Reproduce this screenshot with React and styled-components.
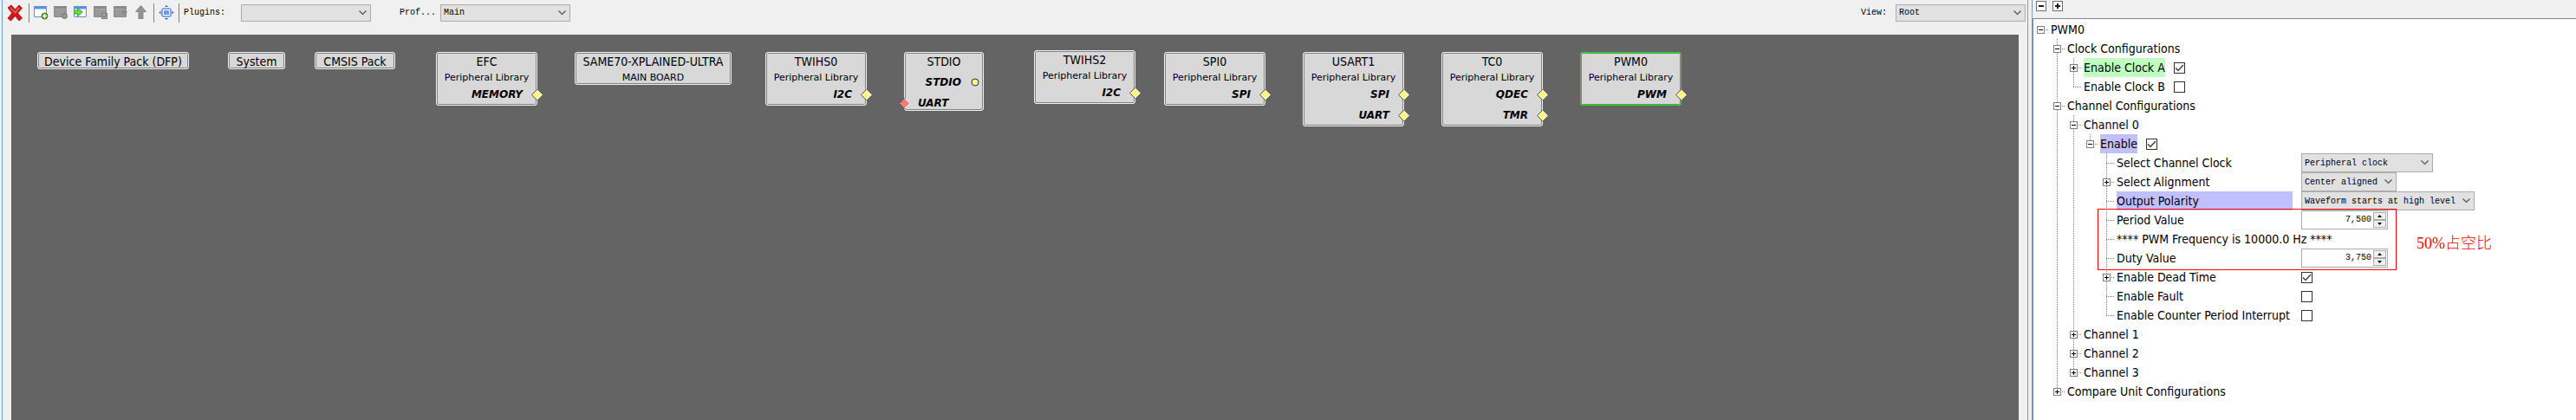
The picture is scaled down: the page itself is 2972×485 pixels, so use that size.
import React from 'react'
import styled, { createGlobalStyle, css } from 'styled-components'

const ui = `"DejaVu Sans", Verdana, sans-serif`
const narrow = `"DejaVu Sans Condensed", Tahoma, sans-serif`
const mono = `"Liberation Mono", "Courier New", monospace`

const blocks = [
    { name: 'Device Family Pack (DFP)', x: 30, y: 20, w: 175 },
    { name: 'System', x: 250, y: 20, w: 66 },
    { name: 'CMSIS Pack', x: 350, y: 20, w: 93 },
    { name: 'EFC', sub: 'Peripheral Library', x: 490, y: 20, w: 117, ports: [{ name: 'MEMORY' }] },
    { name: 'SAME70-XPLAINED-ULTRA', sub: 'MAIN BOARD', x: 650, y: 20, w: 181 },
    { name: 'TWIHS0', sub: 'Peripheral Library', x: 870, y: 20, w: 117, ports: [{ name: 'I2C' }] },
    { name: 'STDIO', x: 1030, y: 20, w: 92, ports: [{ name: 'STDIO', kind: 'dot' }, { name: 'UART', kind: 'in' }] },
    { name: 'TWIHS2', sub: 'Peripheral Library', x: 1180, y: 18, w: 117, ports: [{ name: 'I2C' }] },
    { name: 'SPI0', sub: 'Peripheral Library', x: 1330, y: 20, w: 117, ports: [{ name: 'SPI' }] },
    { name: 'USART1', sub: 'Peripheral Library', x: 1490, y: 20, w: 117, ports: [{ name: 'SPI' }, { name: 'UART' }] },
    { name: 'TC0', sub: 'Peripheral Library', x: 1650, y: 20, w: 117, ports: [{ name: 'QDEC' }, { name: 'TMR' }] },
    { name: 'PWM0', sub: 'Peripheral Library', x: 1810, y: 20, w: 117, ports: [{ name: 'PWM' }], active: true },
]

// guides: one letter per indent column, | line, . blank, t branch, e last branch
const treeTop = [
    { id: 'pwm0', label: 'PWM0', guides: '.', toggle: '-' },
    { id: 'clocks', label: 'Clock Configurations', guides: '.t', toggle: '-' },
    { id: 'clka', label: 'Enable Clock A', guides: '.|t', toggle: '+', mark: '#c0ffc0', check: true },
    { id: 'clkb', label: 'Enable Clock B', guides: '.|e', check: false },
    { id: 'channels', label: 'Channel Configurations', guides: '.t', toggle: '-' },
    { id: 'ch0', label: 'Channel 0', guides: '.|t', toggle: '-' },
    { id: 'ch0en', label: 'Enable', guides: '.||e', toggle: '-', mark: '#c0c0ff', check: true },
    { id: 'clksel', label: 'Select Channel Clock', guides: '.||.t', wide: true, select: 'Peripheral clock', size: 152 },
    { id: 'align', label: 'Select Alignment', guides: '.||.t', toggle: '+', wide: true, select: 'Center aligned', size: 110 },
    { id: 'polarity', label: 'Output Polarity', guides: '.||.t', wide: true, mark: '#c0c0ff', select: 'Waveform starts at high level', size: 200 },
]

const treeMarked = [
    { id: 'period', label: 'Period Value', guides: '.||.t', wide: true, number: '7,500' },
    { id: 'freq', label: '**** PWM Frequency is 10000.0 Hz ****', guides: '.||.t' },
    { id: 'duty', label: 'Duty Value', guides: '.||.t', wide: true, number: '3,750' },
]

const treeBottom = [
    { id: 'dead', label: 'Enable Dead Time', guides: '.||.t', toggle: '+', wide: true, check: true },
    { id: 'fault', label: 'Enable Fault', guides: '.||.t', wide: true, check: false },
    { id: 'irq', label: 'Enable Counter Period Interrupt', guides: '.||.e', wide: true, check: false },
    { id: 'ch1', label: 'Channel 1', guides: '.|t', toggle: '+' },
    { id: 'ch2', label: 'Channel 2', guides: '.|t', toggle: '+' },
    { id: 'ch3', label: 'Channel 3', guides: '.|e', toggle: '+' },
    { id: 'compare', label: 'Compare Unit Configurations', guides: '.e', toggle: '+' },
]

const WindowBase = ({ off, children }) => (
    <svg width="18" height="18" viewBox="0 0 18 18">
        <rect x="0.5" y="1.5" width="14" height="12" rx="0.5" fill={off ? '#989898' : '#fafdff'} stroke={off ? '#8c8c8c' : '#6a8fc4'} />
        <rect x="0" y="1" width="15" height="3" fill={off ? '#8a8a8a' : '#5b92dc'} />
        <path d="M1 4.5h13" stroke={off ? '#a8a8a8' : '#b9d4f5'} />
        {children}
    </svg>
)

const CloseIcon = () => (
    <svg width="20" height="20" viewBox="0 0 20 20">
        <path d="M1 4L5 1L9.500 6L14 1L17.500 4.500L12.500 10L17.500 16L14 19L9.500 13.500L4.500 19L1 16L6 10Z" fill="#d0181c" stroke="#b01a1c" />
        <path d="M4 4L9.500 9.500L14 4" stroke="#e4534c" strokeWidth="2" fill="none" />
    </svg>
)

const AddIcon = () => (
    <WindowBase>
        <circle cx="12.500" cy="12.500" r="3.500" fill="#5e9a34" stroke="#3f7a1c" />
        <path d="M12.500 10v5M10 12.500h5" stroke="#fff" strokeWidth="1.500" />
    </WindowBase>
)

const RemoveIcon = () => (
    <WindowBase off>
        <circle cx="12.500" cy="12.500" r="3" fill="#8a8a8a" stroke="#787878" />
        <path d="M11 12.500h3" stroke="#b4b4b4" />
    </WindowBase>
)

const ImportIcon = () => (
    <WindowBase>
        <path d="M0.500 6h4V3L10 8L4.500 13V10h-4z" fill="#5fdd4a" stroke="#3fae30" />
    </WindowBase>
)

const CheckWindowIcon = () => (
    <WindowBase off>
        <rect x="9.500" y="9.500" width="6" height="6" fill="#a4a4a4" stroke="#808080" />
        <path d="M11 12l1.500 2L15 11" stroke="#6e6e6e" fill="none" />
    </WindowBase>
)

const BackWindowIcon = () => (
    <WindowBase off>
        <path d="M16 8h-4M13 5L10 8l3 3" stroke="#7a7a7a" fill="none" />
    </WindowBase>
)

const UpIcon = () => (
    <svg width="18" height="18" viewBox="0 0 18 18">
        <path d="M8.500 0.500L14.500 7.500H11V15.500H6V7.500H2.500z" fill="#949494" stroke="#868686" />
    </svg>
)

const FitIcon = () => (
    <svg width="18" height="18" viewBox="0 0 18 18">
        <rect x="4" y="4" width="10" height="9" rx="1" fill="#fff" stroke="#2a56c8" />
        <rect x="6" y="6" width="6" height="5" fill="#5aa2f5" />
        <path d="M9 0l2 2H7zM9 17l2-2H7zM0.500 8.500l2-2v4zM17.500 8.500l-2-2v4z" fill="#2a56c8" />
    </svg>
)

const Chevron = () => (
    <svg width="9" height="6" viewBox="0 0 9 6">
        <path d="M0.500 0.500L4.500 4.500L8.500 0.500" stroke="#505050" strokeWidth="1.200" fill="none" />
    </svg>
)

const Diamond = () => (
    <svg width="13" height="13" viewBox="0 0 13 13">
        <path d="M6.500 0.500L12.500 6.500L6.500 12.500L0.500 6.500Z" fill="currentColor" stroke="#e8e8d8" />
        <path d="M6.500 12.500L0.500 6.500L6.500 0.500" fill="none" stroke="#505050" />
    </svg>
)

const Dot = () => (
    <svg width="10" height="10" viewBox="0 0 10 10">
        <circle cx="5" cy="5" r="4" fill="currentColor" stroke="#303030" />
    </svg>
)

const tools = [
    ['Add', AddIcon], ['Remove', RemoveIcon], ['Import', ImportIcon],
    ['Check', CheckWindowIcon], ['Back', BackWindowIcon], ['Up', UpIcon],
]

const Combo = ({ id, value, size, label, tall }) => (
    <ComboBox $size={size} $tall={tall}>
        <select id={id} aria-label={label} defaultValue={value}>
            <option>{value}</option>
        </select>
        <Chevron />
    </ComboBox>
)

const Block = ({ block }) => (
    <BlockBox $x={block.x} $y={block.y} $w={block.w} $active={block.active}>
        <BlockTitle>{block.name}</BlockTitle>
        {block.sub && <BlockSub>{block.sub}</BlockSub>}
        {block.ports && (
            <Ports $bare={!block.sub}>
                {block.ports.map(p => (
                    <Port key={p.name} $kind={p.kind}>
                        {p.name}
                        <Pin $kind={p.kind}>{p.kind === 'dot' ? <Dot /> : <Diamond />}</Pin>
                    </Port>
                ))}
            </Ports>
        )}
    </BlockBox>
)

const TreeRow = ({ row }) => {
    const last = row.guides.length - 1
    const hasField = row.select || row.number || row.check !== undefined
    return (
        <Row>
            {row.guides.split('').map((g, i) => (
                <Guide key={i} $type={g} $arm={i === last}>
                    {i === last && row.toggle && <Toggle aria-label={`Toggle ${row.label}`}><ToggleMark plus={row.toggle === '+'} /></Toggle>}
                </Guide>
            ))}
            <Label as={hasField ? 'label' : 'span'} htmlFor={hasField ? row.id : undefined} $wide={row.wide} $mark={row.mark}>{row.label}</Label>
            {row.check !== undefined && (
                <CheckBox>
                    <input id={row.id} type="checkbox" defaultChecked={row.check} />
                    <svg width="13" height="13" viewBox="0 0 13 13"><path d="M2 6.500L5 9.500L11 3" stroke="#404040" strokeWidth="1.500" fill="none" /></svg>
                </CheckBox>
            )}
            {row.select && <Combo id={row.id} value={row.select} size={row.size} tall />}
            {row.number && (
                <Spinner>
                    <input id={row.id} defaultValue={row.number} />
                    <SpinButtons>
                        <button aria-label="Increase"><svg width="5" height="3" viewBox="0 0 5 3"><path d="M0 3L2.500 0L5 3z" /></svg></button>
                        <button aria-label="Decrease"><svg width="5" height="3" viewBox="0 0 5 3"><path d="M0 0L2.500 3L5 0z" /></svg></button>
                    </SpinButtons>
                </Spinner>
            )}
        </Row>
    )
}

const ToggleMark = ({ plus }) => (
    <svg width="7" height="7" viewBox="0 0 7 7">
        <path d={plus ? 'M1 3.500h5M3.500 1v5' : 'M1 3.500h5'} stroke="#000" />
    </svg>
)

const FoldMark = ({ plus }) => (
    <svg width="10" height="10" viewBox="0 0 10 10">
        <path d={plus ? 'M2 5h6M5 2v6' : 'M2 5h6'} stroke="#202020" strokeWidth="2" />
    </svg>
)

const App = () => {
    return (
        <Shell>
            <GlobalStyle />
            <GraphPane>
                <Toolbar>
                    <ToolButton aria-label="Close" $big><CloseIcon /></ToolButton>
                    <Divider />
                    <ToolGroup>
                        {tools.map(([name, Icon]) => <ToolButton key={name} aria-label={name}><Icon /></ToolButton>)}
                    </ToolGroup>
                    <Divider />
                    <ToolButton aria-label="Fit"><FitIcon /></ToolButton>
                    <Divider />
                    <Field $label={66}>
                        <label htmlFor="plugins">Plugins:</label>
                        <Combo id="plugins" value="" size={150} />
                    </Field>
                    <Field $label={47} $gap={33}>
                        <label htmlFor="profile">Prof...</label>
                        <Combo id="profile" value="Main" size={150} />
                    </Field>
                    <Field $label={40} $end>
                        <label htmlFor="view">View:</label>
                        <Combo id="view" value="Root" size={150} />
                    </Field>
                </Toolbar>
                <Canvas>
                    {blocks.map(b => <Block key={b.name} block={b} />)}
                </Canvas>
            </GraphPane>
            <ConfigPane>
                <FoldBar>
                    <FoldButton aria-label="Collapse all"><FoldMark /></FoldButton>
                    <FoldButton aria-label="Expand all"><FoldMark plus /></FoldButton>
                </FoldBar>
                <Tree>
                    {treeTop.map(r => <TreeRow key={r.id} row={r} />)}
                    <Marked>
                        {treeMarked.map(r => <TreeRow key={r.id} row={r} />)}
                        <RedFrame />
                        <RedNote>50%占空比</RedNote>
                    </Marked>
                    {treeBottom.map(r => <TreeRow key={r.id} row={r} />)}
                </Tree>
            </ConfigPane>
        </Shell>
    )
}

const GlobalStyle = createGlobalStyle`
*{
    box-sizing:border-box;
}
body{
    margin:0;
    background:#f0f0f0;
    color:#000;
}
svg{
    display:block;
    flex:none;
}
button{
    display:flex;
    align-items:center;
    justify-content:center;
    padding:0;
    border:0;
    background:none;
}
`

const Shell = styled.div`
display:flex;
gap:4px;
min-height:100vh;
padding-left:2px;
`

const GraphPane = styled.main`
display:flex;
flex-direction:column;
flex:1;
min-width:0;
border:solid #7a9ebd;
border-width:0 1px;
`

const ConfigPane = styled.aside`
display:flex;
flex-direction:column;
flex:0 0 628px;
border-left:1px solid #7a9ebd;
`

const Toolbar = styled.header`
display:flex;
align-items:center;
height:40px;
padding:0 2px 11px 5px;
font:10px ${mono};
`

const ToolGroup = styled.div`
display:flex;
gap:5px;
`

const ToolButton = styled.button`
width:${props => props.$big ? 20 : 18}px;
height:${props => props.$big ? 20 : 18}px;
`

const Divider = styled.div`
width:1px;
height:22px;
margin:0 5px;
background:#808080;
`

const Field = styled.div`
display:flex;
align-items:center;
margin-left:${props => props.$end ? 'auto' : `${props.$gap || 0}px`};

label{
    width:${props => props.$label}px;
}
`

const ComboBox = styled.div`
display:inline-grid;
align-items:center;
width:${props => props.$size}px;
height:${props => props.$tall ? 22 : 20}px;

select, svg{
    grid-area:1 / 1;
}
select{
    appearance:none;
    width:100%;
    height:100%;
    padding:0 3px;
    border:1px solid #adadb0;
    border-radius:0;
    background:#e1e1e1;
    color:#000;
    font:10px ${mono};
}
svg{
    justify-self:end;
    margin-right:5px;
    pointer-events:none;
}
`

const Canvas = styled.section`
position:relative;
flex:1;
margin:0 10px;
background:#646464;
`

const BlockBox = styled.div`
position:absolute;
left:${props => props.$x}px;
top:${props => props.$y}px;
width:${props => props.$w}px;
padding:2px 1px 0;
border:1px solid ${props => props.$active ? '#00f000' : '#f0f0f0'};
border-radius:3px;
background:#d8d8d8;
box-shadow:inset 0 0 0 1px #808080;
text-align:center;
white-space:nowrap;
`

const BlockTitle = styled.div`
font:14px/16px ${narrow};
`

const BlockSub = styled.div`
margin-top:4px;
font:11px/14px ${ui};
`

const Ports = styled.div`
display:flex;
flex-direction:column;
gap:8px;
margin-top:${props => props.$bare ? 8 : 4}px;
padding-bottom:${props => props.$bare ? 0 : 4}px;
`

const Port = styled.div`
position:relative;
padding:0 ${props => props.$kind === 'dot' ? 24 : 15}px 0 14px;
font:italic bold 12px/16px ${ui};
text-align:${props => props.$kind === 'in' ? 'left' : 'right'};
`

const pinPlace = {
    dot: css`right:3px; top:3px; color:#fff68f;`,
    in: css`left:-8px; top:2px; color:#ff7878;`,
    out: css`right:-8px; top:2px; color:#fff68f;`,
}

const Pin = styled.span`
position:absolute;
${props => pinPlace[props.$kind || 'out']}
`

const FoldBar = styled.div`
display:flex;
gap:7px;
height:21px;
padding:1px 4px;
`

const FoldButton = styled.button`
width:12px;
height:12px;

&&{
    border:1px solid #707070;
    background:#fff;
}
`

const Tree = styled.section`
flex:1;
padding:1px;
border:solid #828790;
border-width:1px 0 0 1px;
background:#fff;
`

const Row = styled.div`
display:flex;
align-items:center;
height:22px;
font:14px ${narrow};
white-space:nowrap;
`

const dotsDown = 'repeating-linear-gradient(180deg, #808080 0 1px, transparent 1px 2px)'
const dotsAcross = 'repeating-linear-gradient(90deg, #808080 0 1px, transparent 1px 2px)'

const Guide = styled.div`
flex:0 0 19px;
height:22px;
padding:7px 0 0 3px;
background-image:${props => props.$type === '.' ? 'none' : dotsDown}, ${props => props.$arm ? dotsAcross : 'none'};
background-position:7px 0, 7px 11px;
background-size:1px ${props => props.$type === 'e' ? 11 : 22}px, 10px 1px;
background-repeat:no-repeat;
`

const Toggle = styled.button`
width:9px;
height:9px;

&&{
    border:1px solid #808080;
    background:#fff;
}
`

const Label = styled.span`
width:${props => props.$wide ? '203px' : 'auto'};
height:22px;
margin-right:10px;
padding-top:1px;
background:${props => props.$mark || 'none'};
line-height:21px;
`

const CheckBox = styled.span`
display:inline-grid;
padding-top:1px;

input, svg{
    grid-area:1 / 1;
}
input{
    appearance:none;
    width:13px;
    height:13px;
    margin:0;
    border:1px solid #303030;
    background:#fff;
}
svg{
    visibility:hidden;
    pointer-events:none;
}
input:checked + svg{
    visibility:visible;
}
`

const Spinner = styled.span`
display:flex;
width:100px;
height:22px;
padding:1px;
border:1px solid #adadb0;
background:#fff;

input{
    flex:1;
    min-width:0;
    padding:0 2px 2px;
    border:0;
    font:10px ${mono};
    text-align:right;
}
`

const SpinButtons = styled.span`
display:flex;
flex-direction:column;
width:15px;

button{
    flex:1;
    border:1px solid #adadb0;
    background:#f0f0f0;
}
`

const Marked = styled.div`
position:relative;
`

const RedFrame = styled.div`
position:absolute;
top:-2px;
left:73px;
width:345px;
height:71px;
border:1px solid #ff0000;
pointer-events:none;
`

const RedNote = styled.div`
position:absolute;
top:25px;
left:441px;
color:#ff0000;
font:300 18px/26px "Liberation Serif", "Noto Sans CJK SC", serif;
`

export default App
